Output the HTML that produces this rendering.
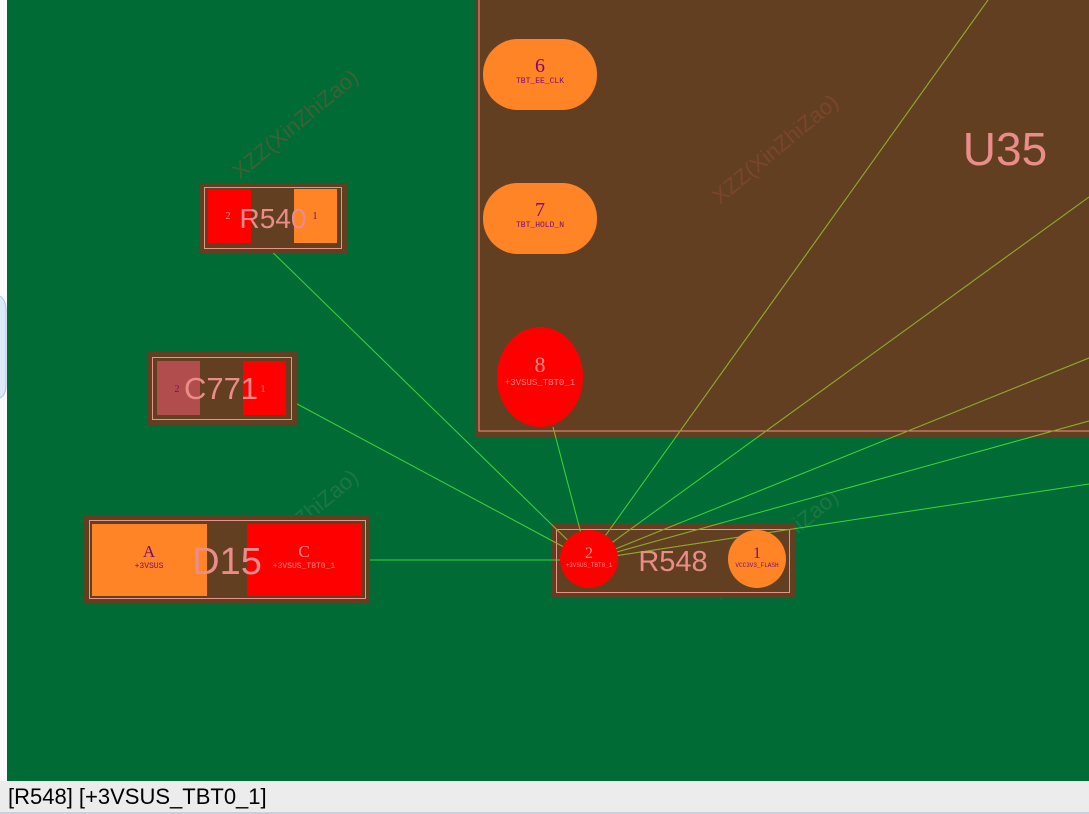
<!DOCTYPE html>
<html><head><meta charset="utf-8"><style>
html,body{margin:0;padding:0;width:1089px;height:814px;overflow:hidden;background:#f0f0f0}
svg{position:absolute;left:0;top:0}
.st{position:absolute;left:0;top:781px;width:1089px;height:31px;background:#ececec;font-family:"Liberation Sans",sans-serif;font-size:22px;line-height:31px;color:#000;padding-left:8px;box-sizing:border-box}
.bl{position:absolute;left:0;top:812px;width:1089px;height:2px;background:#c8d0dc}
</style></head><body>
<svg width="1089" height="814" viewBox="0 0 1089 814">
<defs><clipPath id="u"><rect x="475" y="0" width="614" height="437"/><rect x="552" y="523" width="243" height="75"/></clipPath></defs>
<rect x="0" y="0" width="1089" height="781" fill="#fbfbfb"/>
<rect x="7" y="0" width="1082" height="781" fill="#006b34"/>
<path d="M0 296 Q6 300 6 310 L6 385 Q6 395 0 398" fill="#dde9f8" stroke="#a9c6ec"/>
<!-- U35 -->
<rect x="475" y="0" width="614" height="437" fill="#623f21"/>
<path d="M479 0 V431 H1089" fill="none" stroke="#e9948a" stroke-width="1"/>
<text x="1005" y="165" font-family="Liberation Sans,sans-serif" font-size="46" fill="#ea8c8a" text-anchor="middle">U35</text>
<rect x="483" y="39" width="114" height="71" rx="35" fill="#fe8426"/>
<text x="540" y="72" font-family="Liberation Serif,serif" font-size="20" fill="#7a0a73" text-anchor="middle">6</text>
<text x="540" y="83" font-family="Liberation Mono,monospace" font-size="8" fill="#7a0a73" text-anchor="middle">TBT_EE_CLK</text>
<rect x="483" y="183" width="114" height="71" rx="35" fill="#fe8426"/>
<text x="540" y="216" font-family="Liberation Serif,serif" font-size="20" fill="#7a0a73" text-anchor="middle">7</text>
<text x="540" y="227" font-family="Liberation Mono,monospace" font-size="8" fill="#7a0a73" text-anchor="middle">TBT_HOLD_N</text>
<ellipse cx="540" cy="377" rx="43" ry="50" fill="#ff0000"/>
<text x="540" y="372" font-family="Liberation Serif,serif" font-size="22" fill="#f08a8a" text-anchor="middle">8</text>
<text x="540" y="385" font-family="Liberation Mono,monospace" font-size="9" fill="#f08a8a" text-anchor="middle">+3VSUS_TBT0_1</text>
<!-- watermarks -->
<g font-family="Liberation Sans,sans-serif" font-size="22" opacity="0.35">
<text x="240" y="180" transform="rotate(-40 240 180)" fill="#b0503a">XZZ(XinZhiZao)</text>
<text x="720" y="205" transform="rotate(-40 720 205)" fill="#b0503a">XZZ(XinZhiZao)</text>
<text x="240" y="580" transform="rotate(-40 240 580)" fill="#5a8a60">XZZ(XinZhiZao)</text>
<text x="720" y="600" transform="rotate(-40 720 600)" fill="#5a8a60">XZZ(XinZhiZao)</text>
</g>
<!-- R548 body -->
<rect x="552" y="523" width="243" height="75" fill="#623f21"/>
<rect x="556.5" y="529.5" width="233" height="63" fill="none" stroke="#e9948a"/>
<!-- ratsnest -->
<g stroke-width="1" fill="none" stroke="#3ed53a">
<path d="M588 560 L988 0 M588 560 L1089 197 M588 560 L1089 358 M588 560 L1089 421 M588 560 L1089 484 M588 560 L553 427"/>
<path d="M260 240 L588 560 M286 398 L588 560 M364 560 L588 560"/>
</g>
<g stroke-width="1" fill="none" stroke="#9aa02a" clip-path="url(#u)">
<path d="M588 560 L988 0 M588 560 L1089 197 M588 560 L1089 358 M588 560 L1089 421 M588 560 L1089 484 M588 560 L553 427 M260 240 L588 560 M286 398 L588 560"/>
</g>
<!-- R540 -->
<rect x="199" y="183" width="148" height="70" fill="#623f21"/>
<rect x="204.5" y="187.5" width="137" height="61" fill="none" stroke="#e9948a"/>
<rect x="208" y="189" width="43" height="54" fill="#ff0000"/>
<rect x="294" y="189" width="43" height="54" fill="#fe8426"/>
<text x="228" y="219" font-family="Liberation Serif,serif" font-size="10" fill="#f08a8a" text-anchor="middle">2</text>
<text x="315" y="219" font-family="Liberation Serif,serif" font-size="10" fill="#7a0a73" text-anchor="middle">1</text>
<text x="273" y="228" font-family="Liberation Sans,sans-serif" font-size="28" fill="#ea8c8a" text-anchor="middle">R540</text>
<!-- C771 -->
<rect x="148" y="352" width="149" height="73" fill="#623f21"/>
<rect x="152.5" y="357.5" width="139" height="62" fill="none" stroke="#e9948a"/>
<rect x="157" y="361" width="43" height="54" fill="#b14d4d"/>
<rect x="243" y="361" width="43" height="54" fill="#ff0000"/>
<text x="177" y="392" font-family="Liberation Serif,serif" font-size="10" fill="#7a0a73" text-anchor="middle">2</text>
<text x="263" y="392" font-family="Liberation Serif,serif" font-size="10" fill="#f08a8a" text-anchor="middle">1</text>
<text x="221" y="399" font-family="Liberation Sans,sans-serif" font-size="31" fill="#ea8c8a" text-anchor="middle">C771</text>
<!-- D15 -->
<rect x="84" y="515" width="286" height="89" fill="#623f21"/>
<rect x="89.5" y="520.5" width="276" height="78" fill="none" stroke="#e9948a"/>
<rect x="92" y="524" width="115" height="72" fill="#fe8426"/>
<rect x="247" y="524" width="115" height="72" fill="#ff0000"/>
<text x="149" y="557" font-family="Liberation Serif,serif" font-size="17" fill="#7a0a73" text-anchor="middle">A</text>
<text x="149" y="568" font-family="Liberation Mono,monospace" font-size="8" fill="#7a0a73" text-anchor="middle">+3VSUS</text>
<text x="304" y="557" font-family="Liberation Serif,serif" font-size="17" fill="#f08a8a" text-anchor="middle">C</text>
<text x="304" y="568" font-family="Liberation Mono,monospace" font-size="8" fill="#f08a8a" text-anchor="middle">+3VSUS_TBT0_1</text>
<text x="227" y="574" font-family="Liberation Sans,sans-serif" font-size="38" fill="#ea8c8a" text-anchor="middle">D15</text>
<!-- R548 pads -->
<circle cx="589" cy="559" r="29" fill="#ff0000"/>
<circle cx="757" cy="559" r="29" fill="#fe8426"/>
<text x="589" y="558" font-family="Liberation Serif,serif" font-size="16" fill="#f08a8a" text-anchor="middle">2</text>
<text x="589" y="567" font-family="Liberation Mono,monospace" font-size="6" fill="#f08a8a" text-anchor="middle">+3VSUS_TBT0_1</text>
<text x="757" y="558" font-family="Liberation Serif,serif" font-size="16" fill="#7a0a73" text-anchor="middle">1</text>
<text x="757" y="567" font-family="Liberation Mono,monospace" font-size="6" fill="#7a0a73" text-anchor="middle">VCC3V3_FLASH</text>
<text x="673" y="571" font-family="Liberation Sans,sans-serif" font-size="29" fill="#ea8c8a" text-anchor="middle">R548</text>
</svg>
<div class="st">[R548] [+3VSUS_TBT0_1]</div>
<div class="bl"></div>
</body></html>
